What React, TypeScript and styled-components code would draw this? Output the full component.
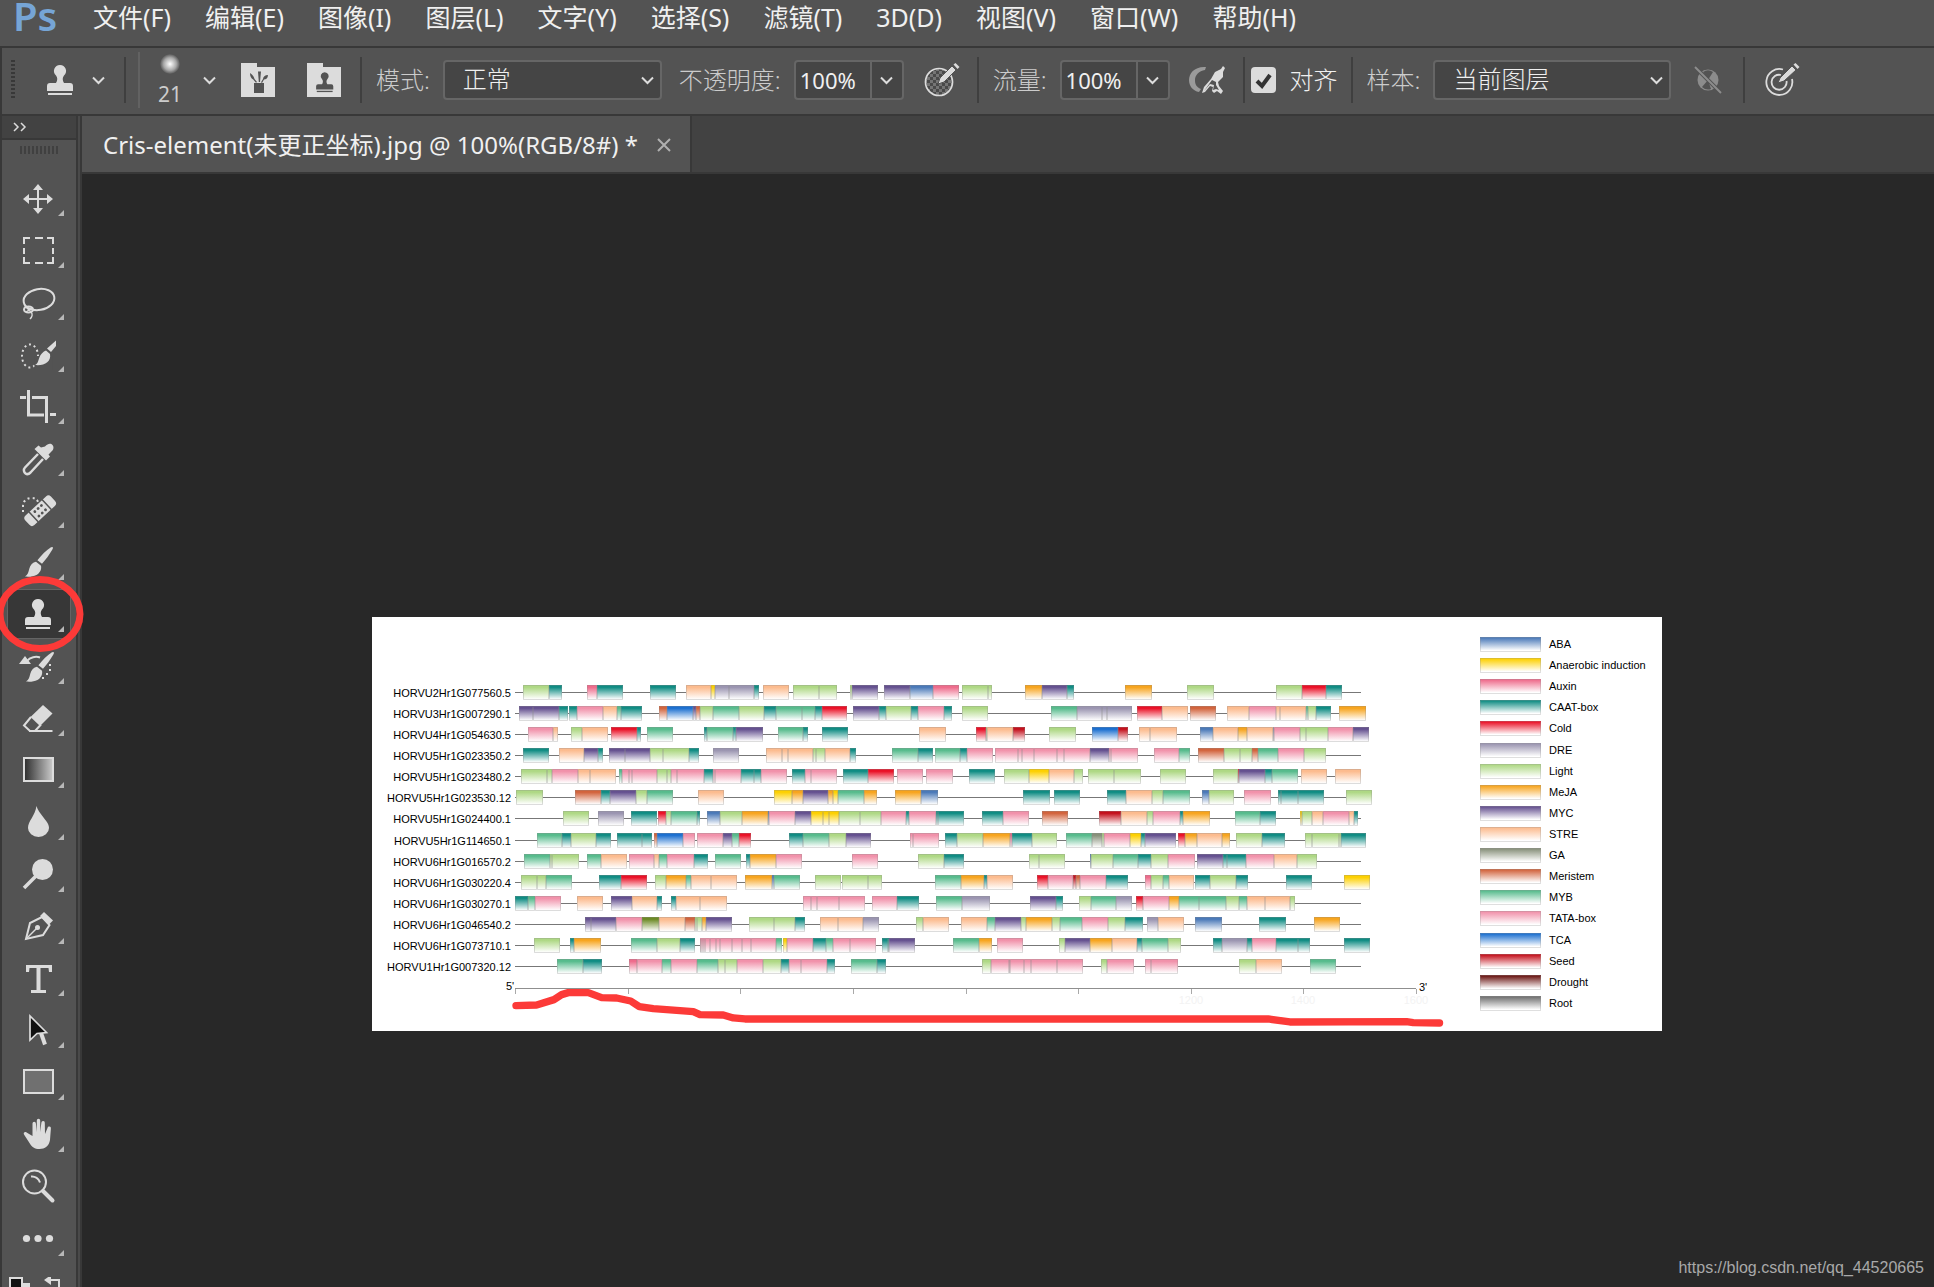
import React from "react";
import styled, { createGlobalStyle } from "styled-components";

const uiFont = `"Noto Sans", "Noto Sans CJK SC", sans-serif`;
const plotFont = `"Liberation Sans", Arial, sans-serif`;

const c = {
  panel: "#535353",
  line: "#383838",
  strip: "#424242",
  field: "#454545",
  fieldLine: "#666666",
  canvas: "#282828",
  icon: "#dcdcdc",
  text: "#f0f0f0",
  dim: "#cccccc",
  mark: "#fc3a38",
};

const GlobalStyle = createGlobalStyle`
  * { box-sizing: border-box; }
  body { margin: 0; background: ${c.canvas}; }
  button, input, select { font: inherit; color: inherit; }
  button { background: none; border: 0; padding: 0; }
`;

const Shell = styled.div`
  display: flex;
  flex-direction: column;
  height: 100vh;
  overflow: hidden;
  font-family: ${uiFont};
  color: ${c.text};
  position: relative;
`;

/* ---------- menu bar ---------- */

const MenuBar = styled.header`
  display: flex;
  align-items: flex-start;
  flex: none;
  height: 48px;
  padding-left: 13px;
  background: ${c.panel};
  border-bottom: 2px solid ${c.line};
`;

const Logo = styled.span`
  width: 80px;
  font-size: 40px;
  line-height: 32px;
  font-weight: 600;
  color: #76a5d6;
`;

const Menus = styled.nav`
  display: flex;
  gap: 34px;
`;

const MenuItem = styled.button`
  font-size: 25px;
  line-height: 34px;
  white-space: nowrap;
`;

/* ---------- options bar ---------- */

const OptionsBar = styled.div`
  display: flex;
  align-items: center;
  flex: none;
  height: 68px;
  padding: 0 0 2px 9px;
  background: ${c.panel};
  border-left: 2px solid ${c.line};
  border-bottom: 2px solid ${c.line};
`;

const BarGrip = styled.div`
  width: 4px;
  height: 40px;
  margin-right: 25px;
  background: repeating-linear-gradient(${c.line} 0 2px, transparent 2px 4px);
`;

const IconButton = styled.button<{ $w: number; $l?: number; $r?: number }>`
  display: flex;
  justify-content: center;
  flex: none;
  width: ${(p) => p.$w}px;
  margin-left: ${(p) => p.$l ?? 0}px;
  margin-right: ${(p) => p.$r ?? 0}px;
`;

const Separator = styled.div<{ $tall?: boolean }>`
  flex: none;
  width: 2px;
  height: ${(p) => (p.$tall ? 56 : 46)}px;
  margin-left: ${(p) => (p.$tall ? 12 : 0)}px;
  background: ${(p) => (p.$tall ? "#626262" : "#3f3f3f")};
`;

const BrushPreview = styled.button`
  display: flex;
  flex-direction: column;
  align-items: center;
  width: 32px;
  margin: 0 17px 0 14px;
  padding-top: 2px;
  color: ${c.dim};
  font-size: 21px;
  line-height: 28px;
`;

const BrushDot = styled.span`
  width: 20px;
  height: 20px;
  margin-bottom: 6px;
  border-radius: 50%;
  background: radial-gradient(circle, #ffffff 0, #a8a8a8 45%, ${c.panel} 72%);
`;

const Label = styled.label`
  margin: 0 13px 0 14px;
  font-size: 24px;
  font-weight: 300;
  line-height: 32px;
  color: ${c.dim};
  white-space: nowrap;
`;

const SelectWrap = styled.div<{ $w: number }>`
  display: grid;
  align-items: center;
  flex: none;
  width: ${(p) => p.$w}px;
  margin-right: 3px;
  & > * { grid-area: 1 / 1; }
  & > svg { justify-self: end; margin-right: 8px; pointer-events: none; }
`;

const Select = styled.select`
  appearance: none;
  width: 100%;
  height: 40px;
  padding: 0 18px 4px;
  border: 2px solid ${c.fieldLine};
  border-radius: 4px;
  background: ${c.field};
  font-size: 24px;
  font-weight: 300;
`;

const Field = styled.div`
  display: flex;
  flex: none;
  width: 110px;
  height: 40px;
  border: 2px solid ${c.fieldLine};
  border-radius: 4px;
  background: ${c.field};
`;

const FieldInput = styled.input`
  flex: 1;
  min-width: 0;
  padding: 0 0 0 4px;
  border: 0;
  background: none;
  font-size: 22px;
`;

const FieldArrow = styled.button`
  display: flex;
  align-items: center;
  justify-content: center;
  width: 32px;
  border-left: 2px solid ${c.fieldLine};
`;

const CheckLabel = styled.label`
  display: flex;
  align-items: center;
  gap: 14px;
  margin: 0 13px 0 6px;
  font-size: 24px;
  font-weight: 300;
  line-height: 32px;
  white-space: nowrap;
`;

const Check = styled.input`
  appearance: none;
  width: 25px;
  height: 26px;
  margin: 0;
  border-radius: 4px;
  background: ${c.icon}
    url("data:image/svg+xml,%3Csvg xmlns='http://www.w3.org/2000/svg' viewBox='0 0 25 26'%3E%3Cpath d='M6 14l5 5 8-11' fill='none' stroke='%23333' stroke-width='4'/%3E%3C/svg%3E")
    center / contain no-repeat;
`;

/* ---------- body ---------- */

const Body = styled.div`
  display: flex;
  flex: 1;
  min-height: 0;
`;

const ToolPanel = styled.aside`
  display: flex;
  flex-direction: column;
  flex: none;
  width: 82px;
  padding-right: 4px;
  border-left: 2px solid ${c.line};
  border-right: 2px solid ${c.line};
  background: linear-gradient(to left, #4a4a4a 0 2px, ${c.line} 2px 4px, ${c.panel} 4px);
  & > * { flex: none; }
`;

const ToolHeader = styled.div`
  display: flex;
  align-items: center;
  height: 24px;
  padding-left: 11px;
  background: ${c.strip};
  border-bottom: 2px solid ${c.line};
`;

const ToolGrip = styled.div`
  width: 38px;
  height: 8px;
  margin: 6px 0 18px 18px;
  background: repeating-linear-gradient(to right, #404040 0 2px, transparent 2px 4px);
`;

const ToolCell = styled.button<{ $active?: boolean }>`
  position: relative;
  display: flex;
  align-items: center;
  justify-content: center;
  width: 64px;
  height: 50px;
  margin: 1px 0 1px 5px;
  border: 1px solid ${(p) => (p.$active ? "#646464" : "transparent")};
  background: ${(p) => (p.$active ? "#373737" : "none")};
  & > svg:first-child { margin-right: 2px; }
`;

const Corner = styled.svg`
  position: absolute;
  right: 6px;
  bottom: 6px;
`;

const MarkRing = styled.svg`
  position: absolute;
  left: -11px;
  top: -16px;
  z-index: 2;
  overflow: visible;
  pointer-events: none;
`;

const Colors = styled.div`
  padding: 13px 0 0 7px;
`;

const Main = styled.main`
  display: flex;
  flex-direction: column;
  flex: 1;
  min-width: 0;
`;

const Tabs = styled.div`
  display: flex;
  flex: none;
  height: 58px;
  background: ${c.strip};
  border-bottom: 2px solid ${c.line};
`;

const Tab = styled.div`
  display: flex;
  align-items: center;
  gap: 19px;
  padding: 2px 19px 0 21px;
  background: ${c.panel};
  border-right: 2px solid ${c.line};
  font-size: 24px;
  line-height: 36px;
  white-space: nowrap;
`;

const Canvas = styled.section`
  display: grid;
  place-items: center;
  flex: 1;
  min-height: 0;
  padding: 187px 0 0 18px;
  background: ${c.canvas};
`;

const Sheet = styled.article`
  display: flex;
  align-items: flex-start;
  width: 1290px;
  height: 414px;
  background: #ffffff;
  color: #000000;
  font-family: ${plotFont};
`;

const Plot = styled.svg`
  flex: none;
  width: 1108px;
  height: 414px;
  font-family: ${plotFont};
  font-size: 11px;
`;

const Legend = styled.ul`
  display: flex;
  flex-direction: column;
  justify-content: space-between;
  height: 374px;
  margin: 20px 0 0;
  padding: 0;
  list-style: none;
`;

const LegendItem = styled.li`
  display: flex;
  align-items: center;
  gap: 8px;
  height: 15px;
  font-size: 11px;
  line-height: 15px;
`;

const Swatch = styled.span<{ $color: string }>`
  width: 61px;
  height: 15px;
  border: 1px solid rgba(150, 150, 150, 0.3);
  background: linear-gradient(${(p) => p.$color} 5%, #ffffff 90%) border-box;
`;

const Watermark = styled.a`
  position: absolute;
  right: 10px;
  bottom: 9px;
  font-family: ${plotFont};
  font-size: 16px;
  line-height: 20px;
  color: #a9a9a9;
  text-decoration: none;
`;

/* ---------- data ---------- */

const kinds: Record<string, [string, string]> = {
  A: ["ABA", "#4a79b8"],
  N: ["Anaerobic induction", "#fdd000"],
  X: ["Auxin", "#ee6b8b"],
  C: ["CAAT-box", "#0f8c83"],
  c: ["Cold", "#ea1026"],
  D: ["DRE", "#9a94b0"],
  L: ["Light", "#aed884"],
  J: ["MeJA", "#f7a41d"],
  M: ["MYC", "#64508f"],
  S: ["STRE", "#fcbb8e"],
  G: ["GA", "#87907a"],
  r: ["Meristem", "#d2633c"],
  B: ["MYB", "#56bb8c"],
  T: ["TATA-box", "#f191aa"],
  t: ["TCA", "#1b6fd0"],
  s: ["Seed", "#c4101c"],
  d: ["Drought", "#6a1512"],
  R: ["Root", "#707070"],
  O: ["", "#6c8a25"],
};

/* Each run starts at a position and lists "kind + end position" of its motifs. */
const genes: [string, string][] = [
  ["HORVU2Hr1G077560.5", "459 L538 C575|651 X682 C758|841 C919|948 S1024 N1034 D1078 D1153 C1166|1180 S1257|1270 L1348 L1400|1439 L1445 M1523|1543 M1620 A1688 X1766|1777 L1853 L1865|1966 J2016 M2092 C2113|2266 J2345|2452 L2531|2719 L2796 c2867 C2915"],
  ["HORVU3Hr1G007290.1", "447 M490 M568 C593|598 C622 T698 S740 B752 C815|868 r891 t968 M979 r991 L1030 B1108 L1183 C1217 B1295 B1335 C1355 c1432|1450 M1526 C1548 L1624 C1645 T1722 C1745|1777 L1854|2044 B2121 D2197 D2210 D2285|2302 c2377 S2453|2461 r2539|2572 S2638 T2717 S2731 S2807 B2813 L2839 C2882|2908 J2987"],
  ["HORVU4Hr1G054630.5", "475 T550 S563|603 L637 S713|724 c800 C814|832 B908|1003 C1012 B1088 C1099 M1178|1224 B1300 C1313|1355 C1433|1648 S1727|1819 c1847 L1852 S1928 s1964|2038 L2117|2167 t2245 s2273|2308 S2341 S2421|2491 A2529 S2605 J2632 S2708 D2713 T2791 L2809 L2875 T2950 M2996"],
  ["HORVU5Hr1G023350.2", "459 C536|567 S643 M683 C698|717 M766 M841 L880 L958 C986|1030 D1106|1189 S1237 S1255 S1330 L1338 L1366 S1441 C1457|1567 B1643 C1688|1696 B1771 C1790 T1868|1875 T1943 T1957 T1993 T2060 T2083 T2161 M2216 T2223 T2303|2351 T2428 B2459|2485 r2561 L2611 L2647 r2665 B2725 T2803 L2867"],
  ["HORVU5Hr1G023480.2", "453 L530 L547 T625 S661 S737|748 B756 T778 T785 T862 L890 L904 T922 T1003 C1030 T1035 T1112 C1151|1153 C1174 T1250|1267 C1306 T1323 T1400|1420 C1494 c1571|1582 T1660|1668 T1748|1798 C1875|1903 L1978 N2036 S2111 L2140|2155 L2233 L2312|2371 L2447|2529 L2604 c2608 M2686 C2707 B2783|2794 S2870|2896 S2973"],
  ["HORVU5Hr1G023530.12", "438 L518|616 r694 C721 M799 L831 B908|984 S1061|1213 N1266 J1298 M1375 J1388 N1405 B1483 J1520|1576 J1654 A1703|1960 C2039|2053 C2130|2212 C2268 S2345 L2380 B2459|2497 A2516 L2593|2623 T2704|2725 C2734 C2785 C2861|2929 L3005"],
  ["HORVU5Hr1G024400.1", "580 L656|685 D761|783 C860|865 c888 L904 B980 C989|1012 A1051 L1117 J1194 A1198 T1274 M1322 N1360 N1378 N1408 L1471 L1532 T1608 C1616 T1697 C1703 C1781|1837 C1898 T1976|2016 r2093|2188 s2252 S2330 L2348 T2430 C2440 J2519|2596 B2671 C2717|2791 N2797 L2827 S2860 T2936 S2951 C2963"],
  ["HORVU5Hr1G114650.1", "501 B577 C604 L679 C722|741 C817 C845|853 r862 t939 T976|981 T1060 M1086 B1107 c1142|1257 C1300 B1376 L1427 M1502|1621 T1630 T1706|1726 C1762 L1840 J1919 X1926 C1985 L2060|2089 B2165 G2195 L2201 T2279 N2314 C2325 M2417|2425 c2446 J2480 S2557 J2579|2599 L2675 C2744|2806 L2827 L2906 L2913 C2987"],
  ["HORVU6Hr1G016570.2", "462 B541 L547 L626|651 B694 S770|776 T853 S868 B892 T973 C1013|1036 B1113|1127 C1141 J1217 T1295|1445 T1523|1645 L1722 C1781|1977 L2008 L2084|2159 A2164 L2230 B2305 C2344 L2395 T2474|2481 M2558 C2572 C2628 T2711 S2782 L2840"],
  ["HORVU6Hr1G030220.4", "453 L502 L529 B605|688 C754 c831|856 L889 J949 B964 S1024 S1100|1126 J1205 A1212 B1289|1336 L1412|1417 L1495 L1535|1696 B1774 J1843 C1852 S1928|2002 c2033 T2110 s2117 r2129 T2208 C2273|2326 X2342 L2380 B2396 S2471|2476 C2520 L2599 C2633|2749 C2825|2923 N2999"],
  ["HORVU6Hr1G030270.1", "436 C475 B496 T572|622 S698|724 M787 S862 C875|904 C918 S991 S1070|1300 T1322 T1341 T1408 T1484|1505 T1582 C1646|1699 B1777 D1859|1981 M2059 C2078|2128 L2163 B2239 D2285|2299 c2320 T2396 J2428 B2488 B2568 L2608 B2631 S2684 S2759 L2775"],
  ["HORVU6Hr1G046540.2", "645 M662 M737 T815 O868 S945 r974 L982 L996 J1009 M1085|1138 L1213 L1276 C1304|1351 S1405 S1480 D1526|1637 L1660 S1736|1774 S1850 B1876 M1954 L1968 J2045 L2071 B2137 T2213 L2266 C2318|2332 D2365 S2441|2476 A2555|2668 C2747|2832 J2909"],
  ["HORVU6Hr1G073710.1", "492 L569|600 C613 J692|783 B862 L931 C974|989 T993 T998 T1006 T1021 T1038 T1050 T1087 T1117 T1144 T1219 B1235|1240 N1252 T1330 C1368 B1389 T1441 T1517|1537 C1553 C1558 M1635|1750 B1828 J1866|1882 T1958|2068 L2085 M2161 J2225 S2302 C2317 B2395 L2432|2529 C2557 D2632 C2645 T2719 C2785 C2819|2923 C2999"],
  ["HORVU1Hr1G007320.12", "562 B640 C695|778 X800 T877 B904 T980 B1043 L1066 L1100 T1180 L1232 C1258 T1294 T1372 C1394|1444 B1522 C1547|1835 L1864 T1916 T1921 T1963 T1984 T2060 T2138|2194 L2212 T2291|2326 T2342 T2424|2608 L2659 S2735|2821 B2897"],
];

const px = (pos: number) => Math.round((pos - 6) / 3);
const rowTop = (i: number) => 68 + Math.round((i * 274) / 13);
const gradientId = (k: string) => `k-${k === k.toLowerCase() ? "l" : "u"}${k}`;
const ticks = [436, 775, 1111, 1450, 1789, 2125, 2464, 2800, 3139];

function MotifPlot() {
  return (
    <Plot viewBox="0 0 1108 414" role="img" aria-label="Cis-element map">
      <defs>
        {Object.entries(kinds).map(([k, [, color]]) => (
          <linearGradient key={k} id={gradientId(k)} x1="0" y1="0" x2="0" y2="1">
            <stop offset="0" stopColor={color} />
            <stop offset="0.15" stopColor={color} />
            <stop offset="0.95" stopColor="#ffffff" />
          </linearGradient>
        ))}
      </defs>
      {genes.map(([name, runs], i) => {
        const y = rowTop(i);
        return (
          <g key={name}>
            <text x={139} y={y + 12} textAnchor="end">{name}</text>
            <rect x={px(436)} y={y + 7} width={px(2973) - px(436)} height="1" fill="#777777" />
            {runs.split("|").map((run) => {
              const [first, ...parts] = run.split(" ");
              let start = Number(first);
              return parts.map((part) => {
                const k = part[0];
                const end = Number(part.slice(1));
                const x = px(start);
                const w = Math.max(1, px(end) - x);
                start = end;
                return (
                  <g key={part + x}>
                    <rect x={x} y={y} width={w} height="15" fill={`url(#${gradientId(k)})`} />
                    <path d={`M${x + 0.5} ${y + 14.5}V${y + 0.5}H${x + w - 0.5}V${y + 14.5}Z`} fill="none" stroke="#8c8c8c" strokeOpacity="0.3" />
                  </g>
                );
              });
            })}
          </g>
        );
      })}
      <path d={`M${px(436)} 371.5H${px(3139)}`} stroke="#8f8f8f" />
      {ticks.map((t) => (
        <path key={t} d={`M${px(t) + 0.5} 372v5`} stroke="#a9a9a9" />
      ))}
      <text x={134} y={373}>5'</text>
      <text x={1047} y={374}>3'</text>
      <g fill="#f3f3f3" textAnchor="middle">
        <text x={px(2464)} y={387}>1200</text>
        <text x={px(2800)} y={387}>1400</text>
        <text x={px(3139)} y={387}>1600</text>
      </g>
      <path
        transform="scale(0.3333) translate(-6 -24)"
        d="M438 1190L500 1188L552 1172L575 1157L595 1151H655L695 1166L740 1167L782 1176L808 1193L850 1199L920 1204L970 1208L990 1217L1060 1218L1090 1227L1125 1230H2695L2760 1239L3110 1238L3130 1241L3209 1242"
        fill="none" stroke={c.mark} strokeWidth="22" strokeLinecap="round" strokeLinejoin="round"
      />
    </Plot>
  );
}

/* ---------- icons ---------- */

const Chevron = () => (
  <svg width="13" height="9" viewBox="0 0 13 9" fill="none" stroke={c.icon} strokeWidth="2">
    <path d="M1 1.5l5.5 5.5L12 1.5" />
  </svg>
);

const stampShape = (
  <>
    <path d="M20 5a6 6 0 0 1 4 10.5c-1.7 2-1.7 5 0 7.5H30a3 3 0 0 1 3 3v5H7v-5a3 3 0 0 1 3-3h6c1.7-2.500 1.7-5.500 0-7.500A6 6 0 0 1 20 5z" />
    <path d="M8 33h24v2H8z" />
  </>
);

const brushShape = (
  <>
    <path d="M34.5 5c.8.6.4 1.6-.3 2.8-3 5.2-6.5 10-10.2 14l-4.6-3.6C23.5 13 28.5 8 33 5.2z" />
    <path d="M18 19.8l5 4c.8 3.6-1 7.2-4.6 9.2-3.2 1.7-7.4 2-11.4 1.6 3-2 3.4-4.4 4.2-7.6 1-4 3.6-6.6 6.8-7.2z" />
  </>
);

const I = c.icon;

const tools: [string, React.ReactNode][] = [
  ["移动", <><path d="M20 10v22M9 21h22" stroke={I} strokeWidth="2" /><path d="M20 6l5 6H15zM20 36l5-6H15zM5 21l6-5v10zM35 21l-6-5v10z" /></>],
  ["矩形选框", <path d="M6 14V8h6M17 8h8M29 8h6v6M35 18v6M35 27v6h-6M25 33h-8M12 33H6v-6M6 24v-6" fill="none" stroke={I} strokeWidth="2" />],
  ["套索", <g fill="none" stroke={I} strokeWidth="2"><ellipse cx="21" cy="17.5" rx="15.5" ry="10.5" transform="rotate(-10 21 17.5)" /><ellipse cx="10.5" cy="27.5" rx="4.5" ry="3" /><path d="M7 24l6 6c2 2 1 5-1 7M8 30l6-4" strokeWidth="1.5" /></g>],
  ["快速选择", <><ellipse cx="12" cy="22" rx="8" ry="11.5" fill="none" stroke={I} strokeWidth="2" strokeDasharray="2 3" /><path d="M16.5 22h18v14h-18z" fill={c.panel} stroke="none" /><path d="M38 6.5V12L33 18l-4-3.5zM28 16.5l4 3.5c1.5 8-6 12-15 11 3-1.5 3-3.5 4.2-7 1.4-4 4-6.5 6.8-7.5z" /></>],
  ["裁剪", <path d="M10.5 4v25H26M32 28.5h6M2 11.5h6M14 11.5h14.5V37" fill="none" stroke={I} strokeWidth="3" />],
  ["吸管", <><path d="M27 7.5c3-3.5 6-3.5 7.5-1.5s1.5 4.5-1.5 7l-2.5 2.5 1.5 2-4 4L16.5 10l4-3.5 2.5 2z" transform="translate(0 1)" /><path d="M20 16L7 29.5c-2 2-1 5 .5 6s3.5.5 5-1L25 21" fill="none" stroke={I} strokeWidth="2.5" /></>],
  ["修复画笔", <><path d="M5 22V16c0-5 4-8 8-8s6 1 7 4" fill="none" stroke={I} strokeWidth="2" strokeDasharray="2 3" /><g transform="rotate(-43 21.5 20)"><rect x="4" y="14.5" width="35" height="13" rx="3.5" /><path d="M12.500 14v14M30.5 14v14" stroke={c.panel} strokeWidth="1.5" /><g fill={c.panel}><circle cx="17" cy="18" r="1.4" /><circle cx="21.5" cy="18" r="1.4" /><circle cx="26" cy="18" r="1.4" /><circle cx="17" cy="24" r="1.4" /><circle cx="21.5" cy="24" r="1.4" /><circle cx="26" cy="24" r="1.4" /></g></g></>],
  ["画笔", brushShape],
  ["仿制图章", stampShape],
  ["历史记录画笔", <><g transform="translate(1 1)">{brushShape}</g><path d="M1 18l6-8 6 8z" /><path d="M9 15c3-4 9-5 13-3.5" fill="none" stroke={I} strokeWidth="2" /><path d="M31 18h2v2h-2zM31 23h2v2h-2zM28 27h2v2h-2zM24 31h2v2h-2z" /></>],
  ["橡皮擦", <><path d="M25 7l9.500 8.500L22 28l-9.500-9z" /><path d="M13 19l-7 8.500 6 5.500h5l6-6.500M11 33h23.500" fill="none" stroke={I} strokeWidth="2" /></>],
  ["渐变", <><defs><linearGradient id="ramp"><stop offset="0" stopColor="#2c2c2c" /><stop offset="1" stopColor="#cccccc" /></linearGradient></defs><rect x="6" y="8" width="29" height="23" fill="url(#ramp)" stroke={I} strokeWidth="2" /></>],
  ["模糊", <path d="M18.5 4c1 4 3.5 7 7 11.500 3 4 5.5 6.5 5.5 10.5a10.5 9 0 0 1-21 0c0-7 7-12 8.5-22z" />],
  ["减淡", <><circle cx="24.5" cy="15.5" r="10.5" /><path d="M18 22L6 34" stroke={I} strokeWidth="3.5" /></>],
  ["钢笔", <><path d="M8 33l4-16 12-6 7.5 8L25 29z" fill="none" stroke={I} strokeWidth="2" /><path d="M8 33l11-11" stroke={I} strokeWidth="1.5" /><circle cx="19.5" cy="21.5" r="2.5" /><path d="M26 6l9 8.500-4 4-9-8.500z" /></>],
  ["文字", <path d="M8 7h26v7h-3l-.5-4H22.500v22H28v3H13v-3h5.500V10H11.500L11 14H8z" />],
  ["路径选择", <><path d="M23 23l4 11.500" stroke={I} strokeWidth="4" /><path d="M12 6v24l7-6.500 9.500-1z" fill="#111111" stroke={I} strokeWidth="1.7" /></>],
  ["矩形", <rect x="6" y="8" width="29" height="23" fill="#707070" stroke={I} strokeWidth="2" />],
  ["抓手", <path d="M14.5 22V9.500a1.7 1.7 0 0 1 3.4 0L18.8 18V6.500a1.7 1.7 0 0 1 3.4 0V18l1.2-9.500a1.7 1.7 0 0 1 3.4.3L27 20l2.500-6a1.7 1.7 0 0 1 3.4.5L32 26c-1 6-5 9-10.500 9-5 0-7.500-2-10-6L6 20.500c-1-2 1-3 2.600-2z" />],
  ["缩放", <g fill="none" stroke={I}><circle cx="16.5" cy="16" r="11.5" strokeWidth="2" /><path d="M13 10.500c4-.5 8 2 9 6" strokeWidth="2" /><path d="M25 25l9.500 9.500" strokeWidth="4" strokeLinecap="round" /></g>],
  ["更多", <><circle cx="8.5" cy="20.5" r="3.6" /><circle cx="20" cy="20.5" r="3.6" /><circle cx="31.5" cy="20.5" r="3.6" /></>],
];

const menus = ["文件(F)", "编辑(E)", "图像(I)", "图层(L)", "文字(Y)", "选择(S)", "滤镜(T)", "3D(D)", "视图(V)", "窗口(W)", "帮助(H)"];

export default function App() {
  return (
    <Shell>
      <GlobalStyle />
      <MenuBar>
        <Logo>Ps</Logo>
        <Menus>
          {menus.map((m) => <MenuItem key={m}>{m}</MenuItem>)}
        </Menus>
      </MenuBar>

      <OptionsBar>
        <BarGrip />
        <IconButton $w={40} aria-label="仿制图章">
          <svg width="40" height="40" viewBox="0 0 40 40" fill={I}>{stampShape}</svg>
        </IconButton>
        <IconButton $w={13} $l={12} $r={19} aria-label="工具预设"><Chevron /></IconButton>
        <Separator />
        <Separator $tall />
        <BrushPreview><BrushDot />21</BrushPreview>
        <IconButton $w={13} $r={25} aria-label="画笔预设"><Chevron /></IconButton>
        <IconButton $w={34} aria-label="画笔面板">
          <svg width="34" height="34" viewBox="0 0 34 34" fill={I}>
            <path d="M0 0h16v4h18v30H0z" />
            <g fill={c.panel}>
              <path d="M13 20h10v10H13z" />
              <path d="M9 10c3 2 4 4 4.5 6L16 19l-1 .8-2.8-3.3C10 15.5 9 13 9 10zM17 8.5h3L19 19h-1.200zM27 12c0 3-2 4.5-4 4.5L21 20l-1-.8 2-3.200c0-2 2-4 5-4z" />
            </g>
          </svg>
        </IconButton>
        <IconButton $w={34} $l={32} $r={19} aria-label="仿制源面板">
          <svg width="34" height="34" viewBox="0 0 34 34" fill={I}>
            <path d="M0 0h16v4h18v30H0z" />
            <g fill={c.panel} transform="translate(4.5 6) scale(0.66)">{stampShape}</g>
          </svg>
        </IconButton>
        <Separator />

        <Label htmlFor="mode">模式:</Label>
        <SelectWrap $w={219}>
          <Select id="mode"><option>正常</option></Select>
          <Chevron />
        </SelectWrap>
        <Label htmlFor="opacity">不透明度:</Label>
        <Field>
          <FieldInput id="opacity" defaultValue="100%" />
          <FieldArrow aria-label="不透明度滑块"><Chevron /></FieldArrow>
        </Field>
        <IconButton $w={36} $l={20} $r={17} aria-label="压力控制不透明度">
          <svg width="36" height="36" viewBox="0 0 36 36">
            <defs>
              <pattern id="checks" width="6" height="6" patternUnits="userSpaceOnUse">
                <path d="M0 0h6v6H0z" fill="#4a4a4a" /><path d="M0 0h3v3H0zM3 3h3v3H3z" fill="#757575" />
              </pattern>
            </defs>
            <circle cx="15" cy="20" r="13.5" fill="url(#checks)" stroke={I} strokeWidth="1.7" />
            <path d="M14 22l2-6L28 4l4 4-12 12z" fill={I} stroke={c.panel} />
            <path d="M29.5 2.5l2-1.5 4 4-2 2z" fill={I} />
          </svg>
        </IconButton>
        <Separator />

        <Label htmlFor="flow">流量:</Label>
        <Field>
          <FieldInput id="flow" defaultValue="100%" />
          <FieldArrow aria-label="流量滑块"><Chevron /></FieldArrow>
        </Field>
        <IconButton $w={38} $l={18} $r={17} aria-label="喷枪">
          <svg width="38" height="32" viewBox="0 0 38 32">
            <path d="M18 3C7 2 1 9 1 16c0 6 4 11 10 12l2-3c-5-2-6-5-6-9 0-5 4-9 10-10z" fill="#9a9a9a" />
            <path d="M14 29l2-6 7-8 4-7 6-3 2-3 2 2-2 4v5l-5 5 1 4 4 5-2 3-4-3-3 2-2-2 1-4-3-1-5 6z" fill={I} />
            <path d="M16 27l6-7 4 1-1 5 3-1 3 1-3-5v-3l-4-2z" fill={c.panel} />
          </svg>
        </IconButton>
        <Separator />

        <CheckLabel><Check type="checkbox" defaultChecked />对齐</CheckLabel>
        <Separator />

        <Label htmlFor="sample">样本:</Label>
        <SelectWrap $w={238}>
          <Select id="sample"><option>当前图层</option></Select>
          <Chevron />
        </SelectWrap>
        <IconButton $w={28} $l={20} $r={21} aria-label="忽略调整图层">
          <svg width="28" height="28" viewBox="0 0 28 28">
            <circle cx="14" cy="14" r="10.5" fill="#8c8c8c" />
            <path d="M14 14L9 6a9 9 0 0 1 10 0zM14 14l-6 7a9 9 0 0 0 9 2z" fill={c.panel} />
            <path d="M1 1l26 26" stroke={c.panel} strokeWidth="4" />
            <path d="M1 1l26 26" stroke="#8c8c8c" strokeWidth="2" />
          </svg>
        </IconButton>
        <Separator />
        <IconButton $w={36} $l={19} aria-label="压力控制大小">
          <svg width="36" height="36" viewBox="0 0 36 36" fill="none" stroke={I} strokeWidth="1.8">
            <path d="M19 7.5A13 13 0 1 0 28 17" />
            <path d="M17 13a7.5 7.5 0 1 0 5.5 6" />
            <path d="M14 21l2-5L28 4l4 4-12 11z" fill={I} stroke={c.panel} strokeWidth="1" />
            <path d="M29.5 2.5l2-1.5 4 4-2 2z" fill={I} stroke="none" />
          </svg>
        </IconButton>
      </OptionsBar>

      <Body>
        <ToolPanel>
          <ToolHeader>
            <svg width="14" height="10" viewBox="0 0 14 10" fill="none" stroke={I} strokeWidth="1.5">
              <path d="M1 1l4 4-4 4M8 1l4 4-4 4" />
            </svg>
          </ToolHeader>
          <ToolGrip />
          {tools.map(([name, icon]) => (
            <ToolCell key={name} aria-label={name} $active={name === "仿制图章"}>
              <svg width="40" height="40" viewBox="0 0 40 40" fill={I}>{icon}</svg>
              {name !== "缩放" && (
                <Corner width="6" height="6" viewBox="0 0 6 6"><path d="M6 0v6H0z" fill="#b8b8b8" /></Corner>
              )}
              {name === "仿制图章" && (
                <MarkRing width="86" height="80" viewBox="0 0 86 80">
                  <ellipse cx="43" cy="40" rx="40" ry="34.5" fill="none" stroke={c.mark} strokeWidth="7" />
                </MarkRing>
              )}
            </ToolCell>
          ))}
          <Colors>
            <svg width="60" height="30" viewBox="0 0 60 30">
              <path d="M8 6h13v20H8z" fill={I} />
              <rect x="1" y="1" width="12" height="12" fill="#111111" stroke={I} strokeWidth="2" />
              <path d="M41 3h9v10" fill="none" stroke={I} strokeWidth="2" />
              <path d="M35 3l7-5v10z" fill={I} />
            </svg>
          </Colors>
        </ToolPanel>

        <Main>
          <Tabs>
            <Tab>
              Cris-element(未更正坐标).jpg @ 100%(RGB/8#) *
              <IconButton $w={14} aria-label="关闭">
                <svg width="14" height="14" viewBox="0 0 14 14" stroke="#b0b0b0" strokeWidth="2"><path d="M1 1l12 12M13 1L1 13" /></svg>
              </IconButton>
            </Tab>
          </Tabs>
          <Canvas>
            <Sheet>
              <MotifPlot />
              <Legend>
                {Object.values(kinds).filter(([name]) => name).map(([name, color]) => (
                  <LegendItem key={name}><Swatch $color={color} />{name}</LegendItem>
                ))}
              </Legend>
            </Sheet>
          </Canvas>
        </Main>
      </Body>
      <Watermark href="https://blog.csdn.net/qq_44520665">https://blog.csdn.net/qq_44520665</Watermark>
    </Shell>
  );
}
